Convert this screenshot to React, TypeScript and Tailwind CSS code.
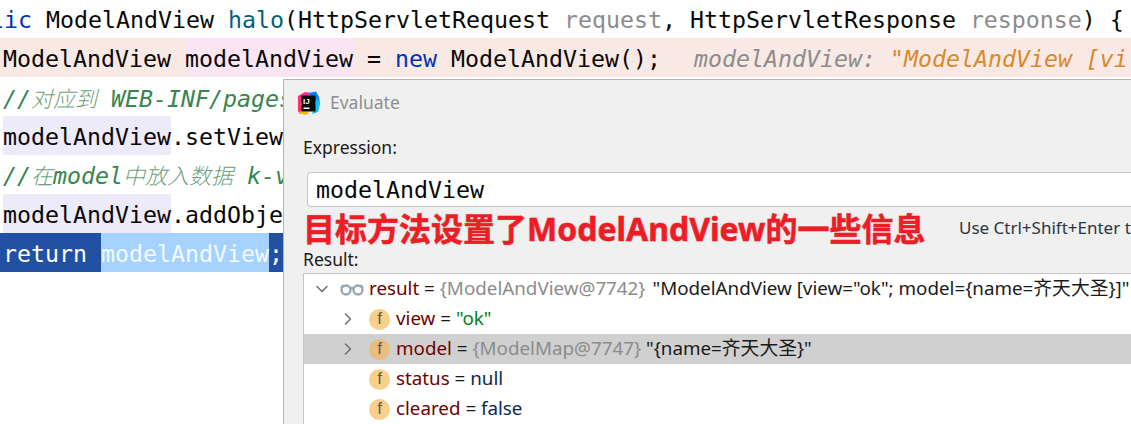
import { ChevronDown, ChevronRight } from 'lucide-react'

const MONO = 'font-["DejaVu_Sans_Mono","Noto_Sans_CJK_SC",monospace]'
const UI = 'font-["Noto_Sans","Noto_Sans_CJK_SC",sans-serif]'

function IdeaLogo() {
  return (
    <svg width="23" height="24" viewBox="0 0 23 24" className="shrink-0">
      <path d="M1 5 L8 1 L14 2 L9 8 L3 14 L1 12 Z" fill="#fc2f7d" />
      <path d="M11 2 L19 0.5 L22 6 L23 13 L17 10 Z" fill="#087cfa" />
      <path d="M20 6 L23 13 L21 21 L15 23 L18 14 Z" fill="#07c3f2" />
      <path d="M1 12 L5 14 L6 19 L3 23 L1 20 Z" fill="#fe315d" />
      <path d="M2 22 L6 18 L12 22 L8 24 Z" fill="#fdb60d" />
      <rect x="4.5" y="4.5" width="14" height="16" fill="#0a0a0a" />
      <text x="6" y="12.5" fill="#fff" fontSize="8" fontWeight="700" fontFamily="Liberation Sans">
        IJ
      </text>
      <rect x="6.5" y="16.5" width="6" height="1.5" fill="#fff" />
    </svg>
  )
}

function Glasses() {
  return (
    <svg width="24" height="14" viewBox="0 0 24 14" className="shrink-0">
      <circle cx="6" cy="8" r="4.5" fill="none" stroke="#9aa7b0" strokeWidth="2.4" />
      <circle cx="18" cy="8" r="4.5" fill="none" stroke="#9aa7b0" strokeWidth="2.4" />
      <path d="M10 6.5 Q12 5 14 6.5 M1 6 L3 3 M23 6 L21 3" fill="none" stroke="#9aa7b0" strokeWidth="1.8" />
    </svg>
  )
}

function FieldBadge({ dark }: { dark?: boolean }) {
  return (
    <span
      className={`flex size-[21px] shrink-0 items-center justify-center rounded-full text-[17px] text-[#6b5b3e] font-["Liberation_Sans",sans-serif] ${
        dark ? 'bg-[#e8bd7e]' : 'bg-[#f8d08c]'
      }`}
    >
      f
    </span>
  )
}

function FieldRow({ selected, arrow, children }: { selected?: boolean; arrow?: boolean; children: React.ReactNode }) {
  return (
    <div className={`flex h-[30px] items-center whitespace-pre pl-[34px] ${selected ? 'bg-[#d0d0d0]' : ''}`}>
      <span className="flex w-[31px] shrink-0 items-center">
        {arrow && <ChevronRight className="size-[20px] text-[#6e6e6e]" strokeWidth={1.8} />}
      </span>
      <FieldBadge dark={selected} />
      <span className="ml-[6px] pb-[2px]">{children}</span>
    </div>
  )
}

export default function App() {
  return (
    <div className={`relative h-[424px] w-[1131px] overflow-hidden bg-white ${MONO} text-[23.25px] text-[#080808]`}>
      <div className="whitespace-pre">
        <div className="-ml-[52px] flex h-[38px] items-center pt-[2px] leading-none">
          <span className="text-[#0033b3]">public </span>ModelAndView <span className="text-[#00627a]">halo</span>
          (HttpServletRequest <span className="text-[#8c8c8c]">request</span>, HttpServletResponse{' '}
          <span className="text-[#8c8c8c]">response</span>) {'{'}
        </div>
        <div className="h-[39px] bg-[#f9e9e4] pl-[3px] leading-[42px]">
          ModelAndView <span className="inline-block h-[39px] bg-[#fae6f3]">modelAndView</span> ={' '}
          <span className="text-[#0033b3]">new</span> ModelAndView();
          <span className="ml-[33px] text-[#8c8c8c] italic">modelAndView: </span>
          <span className="text-[#d98a2b] italic">"ModelAndView [vi</span>
        </div>
        <div className="h-[39px] w-[283px] overflow-hidden pl-[3px] leading-[43px] text-[#37854f] italic">
          //<span className="text-[22px] font-light text-[#6f9f7d]">对应到</span> WEB-INF/pages
        </div>
        <div className="h-[39px] w-[283px] overflow-hidden pl-[3px] leading-[42px]">
          <span className="inline-block h-[39px] bg-[#edeafa]">modelAndView</span>.setView
        </div>
        <div className="h-[39px] w-[283px] overflow-hidden pl-[3px] leading-[42px] text-[#37854f] italic">
          //<span className="text-[22px] font-light text-[#6f9f7d]">在</span>model
          <span className="text-[22px] font-light text-[#6f9f7d]">中放入数据</span> k-v
        </div>
        <div className="h-[39px] w-[283px] overflow-hidden pl-[3px] leading-[42px]">
          <span className="inline-block h-[39px] bg-[#edeafa]">modelAndView</span>.addObje
        </div>
        <div className="h-[39px] w-[283px] overflow-hidden bg-[#2251a3] pl-[3px] leading-[42px] text-white">
          return <span className="inline-block h-[39px] bg-[#a6d2ff] text-[#f4f9ff]">modelAndView</span>;
        </div>
      </div>

      {/* evaluate dialog */}
      <div className={`absolute top-[79px] left-[283px] h-[345px] w-[848px] overflow-hidden border-t border-l border-[#b4b4b4] bg-[#f0f0f0] pl-[19px] text-[17.5px] text-[#1a1a1a] ${UI}`}>
        <div className="-ml-[6px] flex h-[45px] items-center">
          <IdeaLogo />
          <span className="ml-[10px] text-[#8f8f8f]">Evaluate</span>
        </div>
        <div className="mt-[10px] flex h-[24px] items-center">Expression:</div>
        <div className={`mt-[13px] ml-[4px] flex h-[35px] items-center rounded-l-[4px] border border-r-0 border-[#c6c6c6] bg-white pt-[1px] pl-[8px] text-[23.25px] text-[#080808] ${MONO}`}>
          modelAndView
        </div>
        <div className="flex h-[41px] items-center">
          <span className="ml-[656px] text-[17px] whitespace-nowrap text-[#2b3440]">Use Ctrl+Shift+Enter t</span>
        </div>
        <div className="flex h-[22px] items-center">Result:</div>
        <div className="mt-[3px] h-[200px] border border-r-0 border-[#c6c6c6] bg-white text-[18.8px] text-[#1a1a1a]">
          <div className="flex h-[30px] items-center whitespace-pre pb-[1px] pl-[8px]">
            <ChevronDown className="size-[20px] shrink-0 text-[#6e6e6e]" strokeWidth={1.8} />
            <span className="ml-[8px] flex"><Glasses /></span>
            <span className="ml-[5px] text-[#6e0000]">result</span>
            <span> = </span>
            <span className="text-[#8c8c8c]">{'{ModelAndView@7742}'}</span>
            <span className="ml-[7px]">"ModelAndView [view="ok"; model={'{'}name=齐天大圣{'}'}]"</span>
          </div>
          <FieldRow arrow>
            <span className="text-[#6e0000]">view</span> = <span className="text-[#067d17]">"ok"</span>
          </FieldRow>
          <FieldRow arrow selected>
            <span className="text-[#6e0000]">model</span> = <span className="text-[#8c8c8c]">{'{ModelMap@7747}'}</span>{' '}
            "{'{'}name=齐天大圣{'}'}"
          </FieldRow>
          <FieldRow>
            <span className="text-[#6e0000]">status</span> = <span className="text-[#0b2a52]">null</span>
          </FieldRow>
          <FieldRow>
            <span className="text-[#6e0000]">cleared</span> = <span className="text-[#0b2a52]">false</span>
          </FieldRow>
        </div>
      </div>

      {/* red annotation laid over the dialog */}
      <div className={`absolute top-[207px] left-[303px] text-[32px] leading-[44px] font-bold whitespace-nowrap text-[#ee1c25] [-webkit-text-stroke:0.5px_#ee1c25] [text-shadow:0_0_2px_#ddd,0_0_2px_#ddd] ${UI}`}>
        目标方法设置了ModelAndView的一些信息
      </div>
    </div>
  )
}
